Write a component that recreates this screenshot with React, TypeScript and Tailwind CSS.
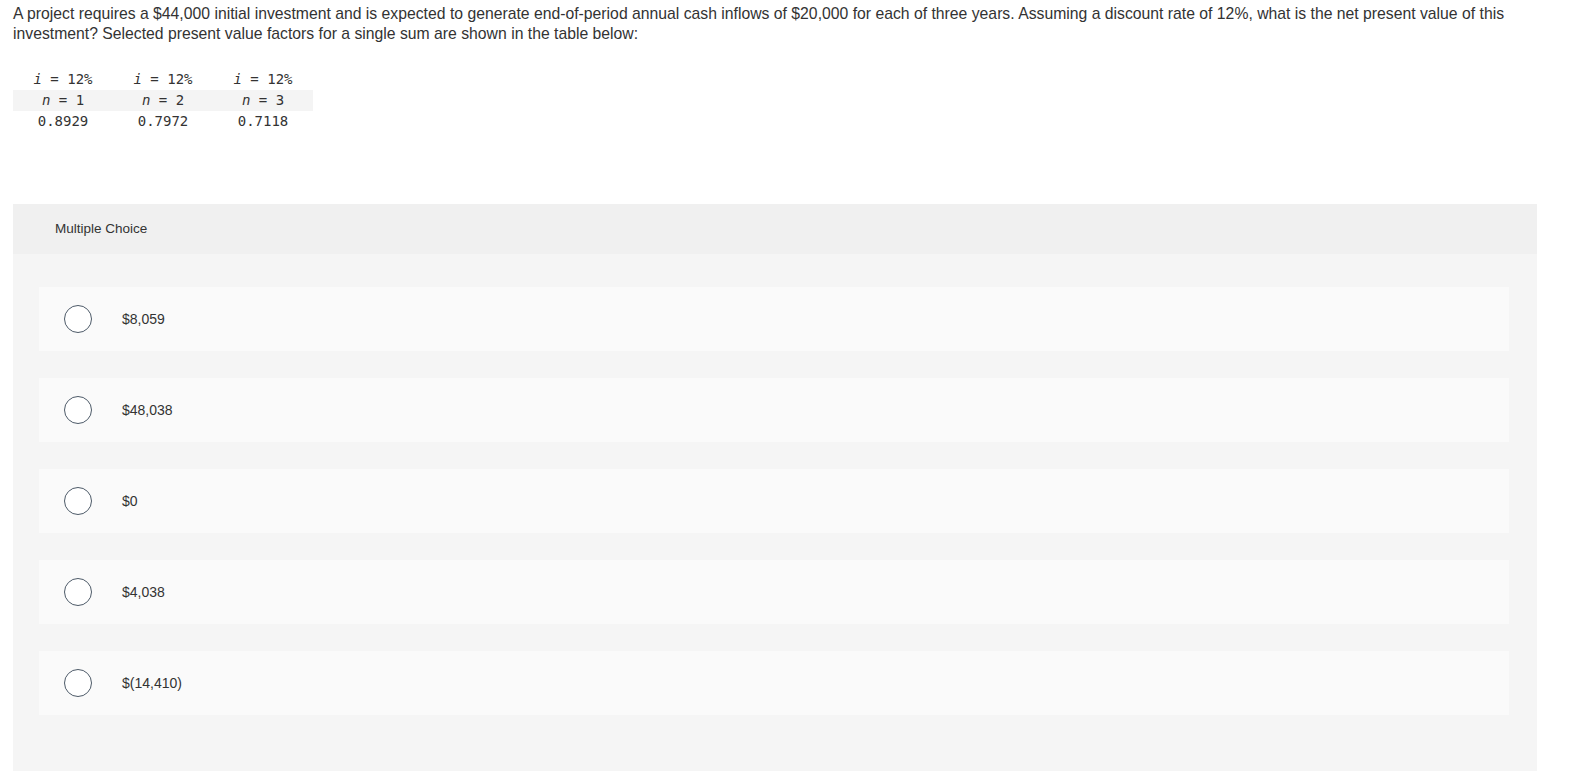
import React from 'react';

const choices = ['$8,059', '$48,038', '$0', '$4,038', '$(14,410)'];

const factors = [
  { n: '1', v: '0.8929' },
  { n: '2', v: '0.7972' },
  { n: '3', v: '0.7118' },
];

export default function App() {
  return (
    <div className="min-h-screen bg-white pl-[13px] pt-[4px] text-[#333] font-['Liberation_Sans',sans-serif]">
      {/* Question */}
      <p className="w-[1524px] text-[15.75px] leading-[20px]">
        A project requires a $44,000 initial investment and is expected to generate end-of-period annual cash inflows of $20,000 for each of three years. Assuming a discount rate of 12%, what is the net present value of this investment? Selected present value factors for a single sum are shown in the table below:
      </p>

      {/* Factor table */}
      <table className="mt-[25px] w-[300px] border-collapse font-['DejaVu_Sans_Mono',monospace] text-[14px] text-[#333]">
        <tbody>
          <tr className="h-[21px]">
            {factors.map((f) => (
              <td key={f.n} className="w-[100px] text-center">
                <i>i</i> = 12%
              </td>
            ))}
          </tr>
          <tr className="h-[21px] bg-[#f4f4f4]">
            {factors.map((f) => (
              <td key={f.n} className="text-center">
                <i>n</i> = {f.n}
              </td>
            ))}
          </tr>
          <tr className="h-[21px]">
            {factors.map((f) => (
              <td key={f.n} className="text-center">
                {f.v}
              </td>
            ))}
          </tr>
        </tbody>
      </table>

      {/* Multiple choice panel */}
      <div className="mt-[72px] w-[1524px] bg-[#f5f5f5]">
        <div className="flex h-[50px] items-center bg-[#f0f0f0] pl-[42px] text-[13.5px] text-[#333]">
          Multiple Choice
        </div>
        <div className="flex flex-col gap-[27px] pl-[26px] pr-[28px] pt-[33px] pb-[56px]">
          {choices.map((c) => (
            <div key={c} className="flex h-[64px] items-center bg-[#fafafa] pl-[25px]">
              <span className="h-[28px] w-[28px] rounded-full border-[1.5px] border-[#4d5a68] bg-white" />
              <span className="ml-[30px] text-[14px] text-[#333]">{c}</span>
            </div>
          ))}
        </div>
      </div>
    </div>
  );
}
